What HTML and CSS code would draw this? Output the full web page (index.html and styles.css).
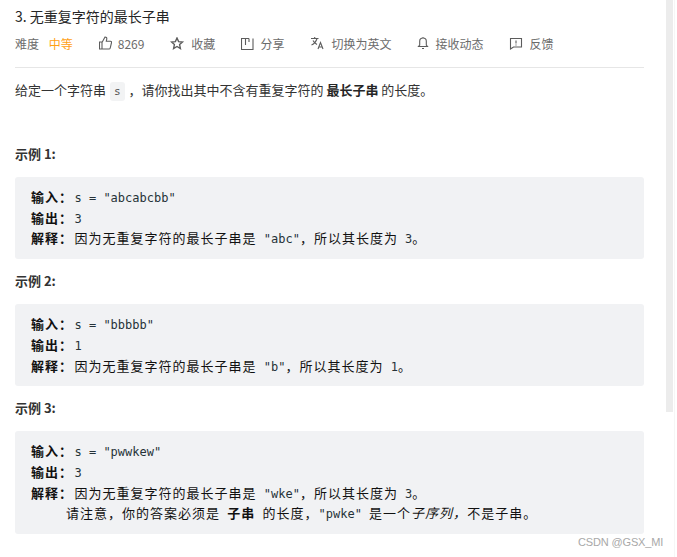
FILE: index.html
```html
<!DOCTYPE html>
<html lang="zh-CN">
<head>
  <meta charset="UTF-8">
  <title>无重复字符的最长子串</title>
  <link rel="stylesheet" href="styles.css">
</head>
<body>

<div class="page">
  <h3 class="title">3. 无重复字符的最长子串</h3>

  <div class="meta">
    <span class="level">难度 <em>中等</em></span>
    <span class="item">
      <svg width="13" height="14" viewBox="0 0 13 14"><path d="M.500 6h2.500v7H.500zM3 6.500 6 1c1.500 0 2 1 1.700 2.300L7.300 5.200h4.200c.8 0 1.200.7 1 1.400l-1.300 5.500c-.2.600-.6.900-1.200.9H3"/></svg>
      8269
    </span>
    <span class="item">
      <svg class="bold" width="15" height="13" viewBox="0 0 15 13"><path d="M7 1 8.600 4.600 12.500 5 9.600 7.600 10.400 11.500 7 9.500 3.600 11.500 4.400 7.600 1.500 5 5.400 4.600z"/></svg>
      收藏
    </span>
    <span class="item">
      <svg width="13" height="13" viewBox="0 0 13 13"><path d="M4.500 1.500H.500v11h11.500V1.500M4.500 1v7M4.500 1.500h3.500M8 5V1.500"/></svg>
      分享
    </span>
    <span class="item">
      <svg width="15" height="14" viewBox="0 0 15 14"><path d="M1 2.500h7.500M4.700 1v1.500M7 2.500C6 6 4 8 1.500 9M3 4.500c1 2 2.500 3 4 4M8 13l2.500-6.500L13 13M9 11h3"/></svg>
      切换为英文
    </span>
    <span class="item">
      <svg width="12" height="14" viewBox="0 0 12 14"><path d="M1.500 10.500h9L9.300 9V5.200C9.300 3.300 7.800 2 6 2S2.700 3.300 2.700 5.200V9zM6 1v1M5 12.500h2"/></svg>
      接收动态
    </span>
    <span class="item">
      <svg width="14" height="13" viewBox="0 0 14 13"><path d="M1.500 1.500h11v8.500H4.500l-3 2zM7 3.500v3M7 7.500v1"/></svg>
      反馈
    </span>
  </div>

  <p class="desc">给定一个字符串 <code>s</code> ，请你找出其中不含有重复字符的 <strong>最长子串</strong> 的长度。</p>

  <p class="ex-title first">示例 1:</p>
  <pre class="ex"><b class="label">输入：</b>s = "abcabcbb"
<b class="label">输出：</b>3
<b class="label">解释：</b><span class="cn">因为无重复字符的最长子串是</span> "abc"<span class="cn">，所以其长度为</span> 3<span class="cn">。</span></pre>

  <p class="ex-title">示例 2:</p>
  <pre class="ex"><b class="label">输入：</b>s = "bbbbb"
<b class="label">输出：</b>1
<b class="label">解释：</b><span class="cn">因为无重复字符的最长子串是</span> "b"<span class="cn">，所以其长度为</span> 1<span class="cn">。</span></pre>

  <p class="ex-title">示例 3:</p>
  <pre class="ex"><b class="label">输入：</b>s = "pwwkew"
<b class="label">输出：</b>3
<b class="label">解释：</b><span class="cn">因为无重复字符的最长子串是</span> "wke"<span class="cn">，所以其长度为</span> 3<span class="cn">。</span>
<span class="indent"></span><span class="cn">请注意，你的答案必须是</span> <b>子串</b> <span class="cn">的长度，</span>"pwke" <span class="cn">是一个</span><i>子序列，</i><span class="cn">不是子串。</span></pre>
</div>

<div class="scrollbar"></div>
<div class="edge"></div>
<div class="mark">CSDN @GSX_MI</div>

</body>
</html>
```
FILE: styles.css
```css
html, body {
  margin: 0;
  height: 557px;
  overflow: hidden;
  background-color: #fff;
}
body {
  font-family: "Noto Sans CJK SC", "Liberation Sans", sans-serif;
  color: #262626;
}
.page {
  width: 629px;
  padding: 8px 0 0 15px;
}
.title {
  margin: 0;
  font-size: 14px;
  line-height: 17px;
  font-weight: 400;
  color: #262626;
}
.meta {
  display: flex;
  align-items: center;
  gap: 26px;
  height: 20px;
  margin-top: 8px;
  padding-bottom: 14px;
  border-bottom: 1px solid #e6e6e6;
  font-size: 12px;
  color: #6b6b6b;
}
.level em {
  font-style: normal;
  color: #ffa116;
  margin-left: 7px;
}
.item {
  display: flex;
  align-items: center;
  gap: 6px;
}
.item svg {
  fill: none;
  stroke: #5c5c5c;
  stroke-width: 1.100;
}
.item svg.bold {
  stroke-width: 1.400;
}
.desc {
  margin: 12px 0 0;
  font-size: 13px;
  line-height: 20px;
  color: #333;
}
.desc code {
  font-family: "DejaVu Sans Mono", monospace;
  font-size: 11px;
  color: #555;
  background-color: #f2f3f4;
  border-radius: 3px;
  padding: 3px 4px;
  margin: 0 1px;
}
.desc strong {
  font-weight: 700;
  color: #262626;
}
.ex-title {
  margin: 13px 0 14px;
  font-size: 13px;
  line-height: 18px;
  font-weight: 700;
  color: #333;
}
.ex-title.first {
  margin-top: 43px;
}
.ex {
  margin: 0;
  padding: 11px 16px 9px;
  background-color: #f1f2f4;
  border-radius: 3px;
  font-family: "DejaVu Sans Mono", "Noto Sans CJK SC", monospace;
  font-size: 12px;
  line-height: 20.700px;
  color: #263238;
}
.ex b, .ex i, .cn {
  font-family: "Noto Sans CJK SC", sans-serif;
  font-size: 13px;
  line-height: 1;
  letter-spacing: 1px;
  color: #111;
}
.label {
  display: inline-block;
  width: 43.500px;
}
.indent {
  display: inline-block;
  width: 35px;
}
.scrollbar {
  position: absolute;
  top: 0;
  left: 666px;
  width: 7px;
  height: 412px;
  background-color: #ececec;
}
.edge {
  position: absolute;
  top: 0;
  left: 674px;
  width: 1px;
  height: 557px;
  background-color: #f6f6f6;
}
.mark {
  position: absolute;
  left: 578px;
  top: 534px;
  font-family: "Liberation Sans", sans-serif;
  font-size: 11px;
  line-height: 16px;
  letter-spacing: -0.150px;
  color: #a8a8a8;
}
```
